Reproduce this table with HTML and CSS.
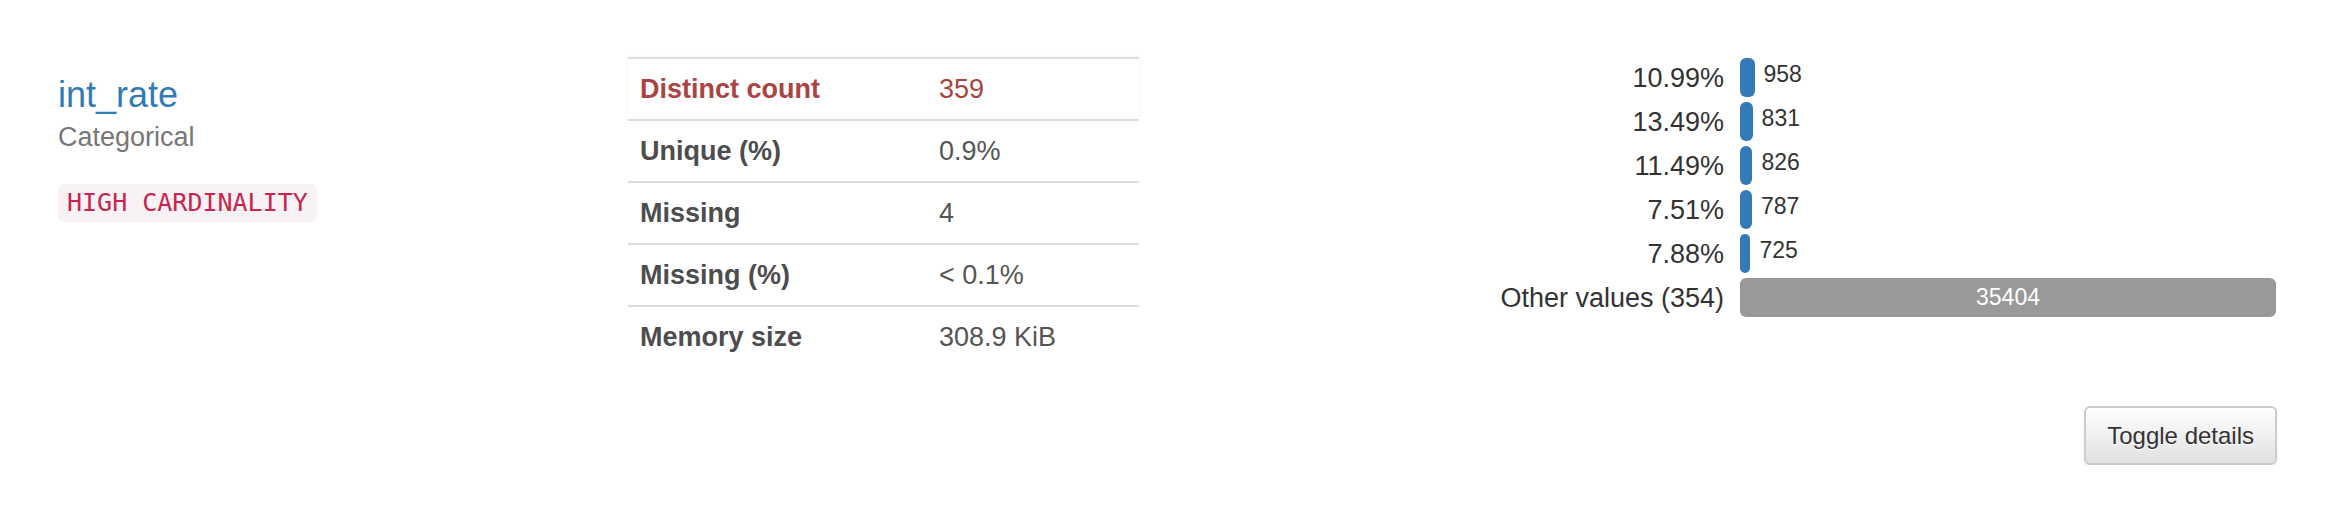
FILE: index.html
```html
<!DOCTYPE html>
<html lang="en">
<head>
<meta charset="utf-8">
<title>int_rate</title>
<link rel="stylesheet" href="styles.css">
</head>
<body>
<div class="variable">
  <div class="var-row">
    <div class="var-info">
      <div class="var-name">int_rate</div>
      <div class="var-type">Categorical</div>
      <div class="badges"><code class="badge">HIGH CARDINALITY</code></div>
    </div>
    <div class="var-stats">
      <table class="stats">
        <colgroup><col class="col-label"><col></colgroup>
        <tbody>
          <tr class="alert"><th>Distinct count</th><td>359</td></tr>
          <tr><th>Unique (%)</th><td>0.9%</td></tr>
          <tr><th>Missing</th><td>4</td></tr>
          <tr><th>Missing (%)</th><td>&lt; 0.1%</td></tr>
          <tr><th>Memory size</th><td>308.9 KiB</td></tr>
        </tbody>
      </table>
    </div>
    <div class="var-freq">
      <div class="freq">
        <div class="freq-label">10.99%</div>
        <div class="freq-cell"><span class="bar" style="width:2.71%"></span><span class="count">958</span></div>
        <div class="freq-label">13.49%</div>
        <div class="freq-cell"><span class="bar" style="width:2.35%"></span><span class="count">831</span></div>
        <div class="freq-label">11.49%</div>
        <div class="freq-cell"><span class="bar" style="width:2.33%"></span><span class="count">826</span></div>
        <div class="freq-label">7.51%</div>
        <div class="freq-cell"><span class="bar" style="width:2.22%"></span><span class="count">787</span></div>
        <div class="freq-label">7.88%</div>
        <div class="freq-cell"><span class="bar" style="width:1.95%"></span><span class="count">725</span></div>
        <div class="freq-label">Other values (354)</div>
        <div class="freq-cell"><span class="bar bar-other">35404</span></div>
      </div>
    </div>
  </div>
  <div class="var-footer">
    <button class="btn" type="button">Toggle details</button>
  </div>
</div>
</body>
</html>
```

FILE: styles.css
```css
* { box-sizing: border-box; }

html, body {
  margin: 0;
  padding: 0;
  background: #ffffff;
}

body {
  font-family: "Liberation Sans", Arial, Helvetica, sans-serif;
  color: #333333;
}

.variable {
  padding: 57px 58px 0 58px;
}

.var-row {
  display: grid;
  grid-template-columns: 570px 511px 1fr;
  align-items: start;
}

/* ---------- info column ---------- */
.var-info {
  padding-top: 18px;
}

.var-name {
  font-size: 36px;
  line-height: 40px;
  color: #337ab7;
}

.var-type {
  margin-top: 7px;
  font-size: 27px;
  line-height: 30px;
  color: #777777;
}

.badges {
  margin-top: 32px;
  display: flex;
}

.badge {
  display: inline-block;
  font-family: "DejaVu Sans Mono", "Liberation Mono", monospace;
  font-size: 25px;
  line-height: 30px;
  padding: 4px 9px;
  color: #c7254e;
  background: #f9f2f4;
  border-radius: 6px;
  white-space: nowrap;
}

/* ---------- stats table ---------- */
.stats {
  width: 100%;
  border-collapse: separate;
  border-spacing: 0;
  table-layout: fixed;
  font-size: 27px;
  line-height: 36px;
}

.col-label { width: 299px; }

.stats th,
.stats td {
  border-top: 2px solid #dddddd;
  padding: 12px;
  text-align: left;
  vertical-align: top;
  white-space: nowrap;
}

.stats th {
  font-weight: bold;
  color: #4d4d4f;
}

.stats td {
  font-weight: normal;
  color: #555555;
}

.stats tr.alert {
  box-shadow: 0 0 3px rgba(0, 0, 0, 0.07);
}

.stats tr.alert th,
.stats tr.alert td {
  color: #a94442;
}

/* ---------- frequency bars ---------- */
.var-freq {
  padding-top: 1px;
}

.freq {
  display: grid;
  grid-template-columns: 1fr 536px;
  column-gap: 16px;
  row-gap: 5px;
  grid-auto-rows: 39px;
}

.freq-label {
  display: flex;
  align-items: center;
  justify-content: flex-end;
  font-size: 27px;
  line-height: 30px;
  color: #333333;
  white-space: nowrap;
}

.freq-cell {
  display: flex;
  align-items: flex-start;
  height: 39px;
}

.bar {
  flex: none;
  display: block;
  height: 39px;
  background: #337ab7;
  border-radius: 6px;
}

.count {
  margin-left: 9px;
  margin-top: 3px;
  font-size: 23px;
  line-height: 26px;
  color: #333333;
}

.bar-other {
  width: 100%;
  background: #999999;
  color: #ffffff;
  text-align: center;
  font-size: 23px;
  line-height: 39px;
}

/* ---------- footer ---------- */
.var-footer {
  display: flex;
  justify-content: flex-end;
  margin-top: 39px;
  margin-right: -1px;
}

.btn {
  font-family: "Liberation Sans", Arial, Helvetica, sans-serif;
  font-size: 24px;
  line-height: 30px;
  height: 59px;
  padding: 12px 21px;
  color: #333333;
  background: linear-gradient(to bottom, #ffffff 0%, #e0e0e0 100%);
  border: 2px solid #cccccc;
  border-radius: 6px;
  box-shadow: 0 1px 2px rgba(0, 0, 0, 0.08);
  text-shadow: 0 1px 0 #ffffff;
  cursor: pointer;
}
```
